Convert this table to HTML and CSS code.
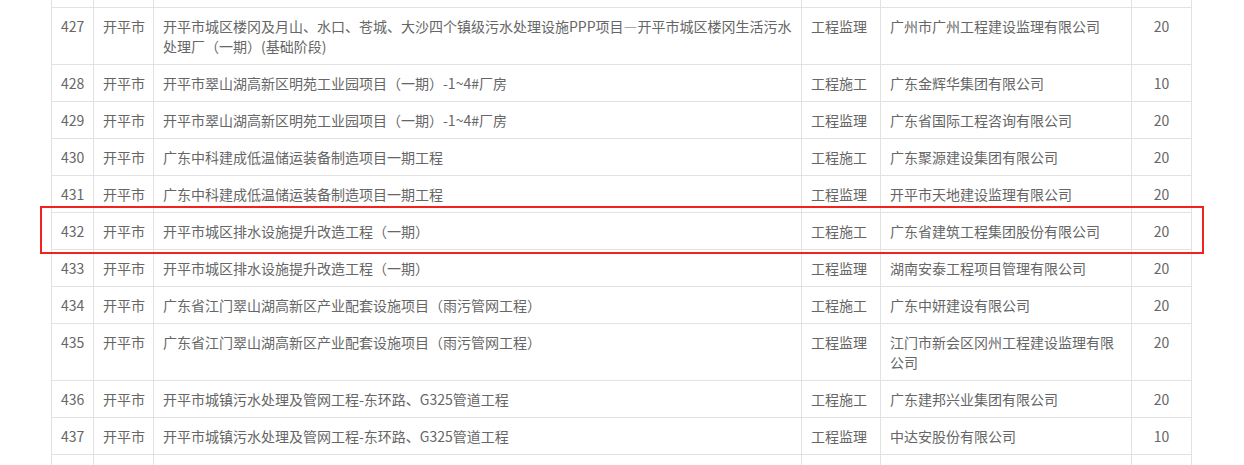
FILE: index.html
```html
<!DOCTYPE html>
<html lang="zh-CN">
<head>
<meta charset="utf-8">
<title>项目列表</title>
<link rel="stylesheet" href="styles.css">
</head>
<body>
<div class="page">
  <table class="grid">
    <colgroup>
      <col class="c-no"><col class="c-city"><col class="c-name"><col class="c-type"><col class="c-org"><col class="c-score">
    </colgroup>
    <tbody>
      <tr class="clip"><td></td><td></td><td></td><td></td><td></td><td></td></tr>
      <tr><td class="nw">427</td><td class="nw">开平市</td><td>开平市城区楼冈及月山、水口、苍城、大沙四个镇级污水处理设施PPP项目—开平市城区楼冈生活污水处理厂（一期）(基础阶段)</td><td class="nw">工程监理</td><td>广州市广州工程建设监理有限公司</td><td class="num">20</td></tr>
      <tr><td class="nw">428</td><td class="nw">开平市</td><td>开平市翠山湖高新区明苑工业园项目（一期）-1~4#厂房</td><td class="nw">工程施工</td><td>广东金辉华集团有限公司</td><td class="num">10</td></tr>
      <tr><td class="nw">429</td><td class="nw">开平市</td><td>开平市翠山湖高新区明苑工业园项目（一期）-1~4#厂房</td><td class="nw">工程监理</td><td>广东省国际工程咨询有限公司</td><td class="num">20</td></tr>
      <tr><td class="nw">430</td><td class="nw">开平市</td><td>广东中科建成低温储运装备制造项目一期工程</td><td class="nw">工程施工</td><td>广东聚源建设集团有限公司</td><td class="num">20</td></tr>
      <tr><td class="nw">431</td><td class="nw">开平市</td><td>广东中科建成低温储运装备制造项目一期工程</td><td class="nw">工程监理</td><td>开平市天地建设监理有限公司</td><td class="num">20</td></tr>
      <tr><td class="nw">432</td><td class="nw">开平市</td><td>开平市城区排水设施提升改造工程（一期）</td><td class="nw">工程施工</td><td>广东省建筑工程集团股份有限公司</td><td class="num">20</td></tr>
      <tr><td class="nw">433</td><td class="nw">开平市</td><td>开平市城区排水设施提升改造工程（一期）</td><td class="nw">工程监理</td><td>湖南安泰工程项目管理有限公司</td><td class="num">20</td></tr>
      <tr><td class="nw">434</td><td class="nw">开平市</td><td>广东省江门翠山湖高新区产业配套设施项目（雨污管网工程）</td><td class="nw">工程施工</td><td>广东中妍建设有限公司</td><td class="num">20</td></tr>
      <tr><td class="nw">435</td><td class="nw">开平市</td><td>广东省江门翠山湖高新区产业配套设施项目（雨污管网工程）</td><td class="nw">工程监理</td><td>江门市新会区冈州工程建设监理有限公司</td><td class="num">20</td></tr>
      <tr><td class="nw">436</td><td class="nw">开平市</td><td>开平市城镇污水处理及管网工程-东环路、G325管道工程</td><td class="nw">工程施工</td><td>广东建邦兴业集团有限公司</td><td class="num">20</td></tr>
      <tr><td class="nw">437</td><td class="nw">开平市</td><td>开平市城镇污水处理及管网工程-东环路、G325管道工程</td><td class="nw">工程监理</td><td>中达安股份有限公司</td><td class="num">10</td></tr>
      <tr class="tail"><td></td><td></td><td></td><td></td><td></td><td></td></tr>
    </tbody>
  </table>
  <div class="highlight"></div>
</div>
</body>
</html>
```

FILE: styles.css
```css
html, body {
  margin: 0;
  padding: 0;
  background: #ffffff;
  overflow: hidden;
}

.page {
  position: relative;
  height: 465px;
  overflow: hidden;
  padding-left: 51px;
  font-family: "Noto Sans CJK SC", "Noto Sans", sans-serif;
  font-size: 14px;
  line-height: 20px;
  color: #666666;
}

.grid {
  width: 1140px;
  table-layout: fixed;
  border-collapse: collapse;
}

.c-no { width: 42px; }
.c-city { width: 60px; }
.c-name { width: 648px; }
.c-type { width: 79px; }
.c-org { width: 251px; }
.c-score { width: 60px; }

.grid td {
  border: 1px solid #e2e2e2;
  padding: 8px 9px;
  vertical-align: top;
  text-align: left;
}

.grid td.nw {
  white-space: nowrap;
  overflow: visible;
}

.grid td.num {
  text-align: center;
}

.grid tr.clip td {
  border-top: none;
  padding: 0;
  height: 7px;
}

.grid tr.tail td {
  height: 20px;
}

.highlight {
  position: absolute;
  left: 40px;
  top: 206px;
  width: 1160px;
  height: 44px;
  border: 2px solid #f2231d;
  pointer-events: none;
}
```
